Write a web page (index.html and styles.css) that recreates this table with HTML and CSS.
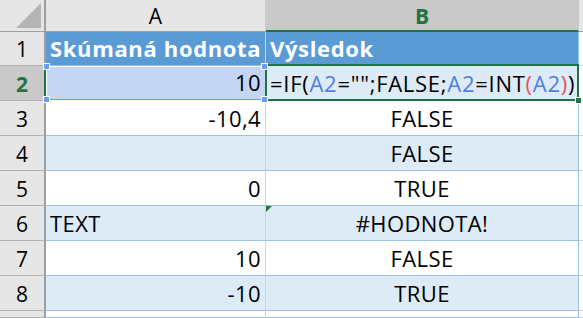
FILE: index.html
```html
<!DOCTYPE html>
<html lang="sk">
<head>
  <meta charset="UTF-8">
  <meta name="viewport" content="width=device-width, initial-scale=1.0">
  <title>Hárok1</title>
  <link rel="stylesheet" href="styles.css">
</head>
<body>

  <div class="sheet">
    <!-- column headers -->
    <div class="corner"><span class="corner-tri"></span></div>
    <div class="colhead">A</div>
    <div class="colhead active">B</div>
    <div class="colhead edge"></div>

    <!-- row 1: table header -->
    <div class="rowhead">1</div>
    <div class="cell th">Skúmaná hodnota</div>
    <div class="cell th last">Výsledok</div>
    <div class="cell spare"></div>

    <!-- row 2: cell being edited -->
    <div class="rowhead active">2</div>
    <div class="cell band num ref">10
      <span class="handle tl"></span><span class="handle tr"></span>
      <span class="handle bl"></span><span class="handle br"></span>
    </div>
    <div class="cell band last editing">=IF(<span class="r1">A2</span>="";FALSE;<span class="r1">A2</span>=INT<span class="paren">(</span><span class="r1">A2</span><span class="paren">)</span>)<span class="fill-handle"></span></div>
    <div class="cell spare"></div>

    <div class="rowhead">3</div>
    <div class="cell num">-10,4</div>
    <div class="cell mid last">FALSE</div>
    <div class="cell spare"></div>

    <div class="rowhead">4</div>
    <div class="cell band num"></div>
    <div class="cell band mid last">FALSE</div>
    <div class="cell spare"></div>

    <div class="rowhead">5</div>
    <div class="cell num">0</div>
    <div class="cell mid last">TRUE</div>
    <div class="cell spare"></div>

    <div class="rowhead">6</div>
    <div class="cell band">TEXT</div>
    <div class="cell band mid last err">#HODNOTA!</div>
    <div class="cell spare"></div>

    <div class="rowhead">7</div>
    <div class="cell num">10</div>
    <div class="cell mid last">FALSE</div>
    <div class="cell spare"></div>

    <div class="rowhead">8</div>
    <div class="cell band num">-10</div>
    <div class="cell band mid last">TRUE</div>
    <div class="cell spare"></div>

    <!-- row 9 only peeks in at the bottom -->
    <div class="rowhead"></div>
    <div class="cell"></div>
    <div class="cell last"></div>
    <div class="cell spare"></div>
  </div>

</body>
</html>
```

FILE: styles.css
```css
body {
  margin: 0;
  background-color: #fff;
  font-family: "Open Sans", sans-serif;
  font-size: 21px;
  color: #000;
  overflow: hidden;
}

.sheet {
  display: grid;
  grid-template-columns: 46px 220px 313px 1fr;
  grid-template-rows: 32px 34px repeat(7, 35px) 1fr;
  width: 583px;
  height: 318px;
  overflow: hidden;
}

.corner {
  background-color: #e6e6e6;
  border-right: 2px solid #9e9e9e;
  border-bottom: 1px solid #9e9e9e;
  box-sizing: border-box;
  position: relative;
}

.corner-tri {
  position: absolute;
  right: 3px;
  bottom: 3px;
  width: 0;
  height: 0;
  border-left: 25px solid transparent;
  border-bottom: 25px solid #b4b4b4;
}

.colhead {
  background-color: #e6e6e6;
  border-right: 1px solid #c6c6c6;
  border-bottom: 1px solid #9e9e9e;
  box-sizing: border-box;
  display: flex;
  align-items: center;
  justify-content: center;
  padding-top: 1px;
}

.colhead.active {
  background-color: #c9c9c9;
  color: #217346;
  font-weight: bold;
  border-bottom: 2px solid #217346;
}

.colhead.edge {
  border-right: none;
}

.rowhead {
  background-color: #e6e6e6;
  border-right: 2px solid #9e9e9e;
  border-bottom: 1px solid #b1b1b1;
  box-sizing: border-box;
  display: flex;
  align-items: center;
  justify-content: center;
  padding-top: 1px;
}

.rowhead.active {
  background-color: #c9c9c9;
  color: #217346;
  font-weight: bold;
  border-right-color: #217346;
}

.cell {
  background-color: #fff;
  border-right: 1px solid #d4d4d4;
  border-bottom: 1px solid #9bc2e6;
  box-sizing: border-box;
  display: flex;
  align-items: flex-end;
  padding: 0 4px 2px 4px;
  font-size: 22px;
  letter-spacing: 0.4px;
  white-space: nowrap;
  position: relative;
}

.cell.band {
  background-color: #ddebf7;
}

.cell.last {
  border-right-color: #9bc2e6;
}

.cell.spare {
  border-right: none;
  border-bottom: 1px solid #d4d4d4;
}

.cell.th {
  background-color: #5b9bd5;
  color: #fff;
  font-weight: bold;
  letter-spacing: 0.65px;
}

.num {
  justify-content: flex-end;
}

.mid {
  justify-content: center;
}

/* A2 highlighted as a formula reference */
.cell.ref {
  background-color: #c5d6f4;
  border-bottom: 2px solid #6d9eeb;
  outline: 1px solid #fff;
  outline-offset: -1px;
}

.handle {
  position: absolute;
  width: 5px;
  height: 5px;
  background-color: #6d9eeb;
  border: 1px solid #fff;
  z-index: 2;
}

.handle.tl { left: -3px; top: -3px; }
.handle.tr { right: -3px; top: -3px; }
.handle.bl { left: -3px; bottom: -4px; }
.handle.br { right: -3px; bottom: -4px; }

/* B2 in edit mode */
.cell.editing {
  padding-left: 4px;
  letter-spacing: 0.72px;
}

.cell.editing::after {
  content: "";
  position: absolute;
  left: -1px;
  top: -2px;
  right: -1px;
  bottom: -1px;
  border: 2px solid #217346;
  pointer-events: none;
}

.fill-handle {
  position: absolute;
  right: -4px;
  bottom: -4px;
  width: 5px;
  height: 5px;
  background-color: #217346;
  border: 1px solid #fff;
  z-index: 3;
}

.r1 {
  color: #4e7fe6;
}

.paren {
  color: #e5536b;
}

/* error indicator in the corner */
.err::before {
  content: "";
  position: absolute;
  left: 0;
  top: 0;
  border-top: 6px solid #1e7d32;
  border-right: 6px solid transparent;
}
```
